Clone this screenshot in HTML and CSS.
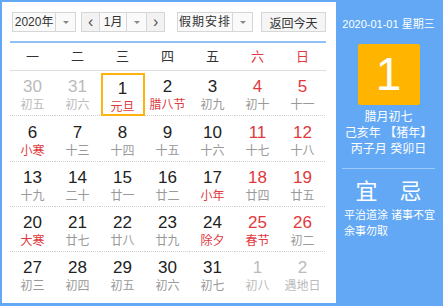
FILE: index.html
```html
<!DOCTYPE html>
<html lang="zh">
<head>
  <meta charset="UTF-8">
  <title>万年历</title>
  <link rel="stylesheet" href="styles.css">
</head>
<body>
  <div class="calendar">
    <div class="main">
      <div class="toolbar">
        <div class="select year">
          <span class="value">2020年</span>
          <span class="arrow"></span>
        </div>
        <div class="month-group">
          <span class="nav">&lsaquo;</span>
          <div class="select month">
            <span class="value">1月</span>
            <span class="arrow"></span>
          </div>
          <span class="nav">&rsaquo;</span>
        </div>
        <div class="select holiday">
          <span class="value">假期安排</span>
          <span class="arrow"></span>
        </div>
        <button class="today-btn">返回今天</button>
      </div>

      <div class="week">
        <span>一</span><span>二</span><span>三</span><span>四</span><span>五</span>
        <span class="red">六</span><span class="red">日</span>
      </div>

      <div class="days" id="days"></div>
    </div>

    <div class="side">
      <div class="side-date">2020-01-01 星期三</div>
      <div class="big-day">1</div>
      <div class="lunar-info">
        <p>腊月初七</p>
        <p>己亥年 【猪年】</p>
        <p>丙子月 癸卯日</p>
      </div>
      <div class="yiji">
        <span>宜</span><span>忌</span>
      </div>
      <div class="yiji-text">平治道涂 诸事不宜<br>余事勿取</div>
    </div>
  </div>

  <script>
    // [day, lunar, flags] flags: o = other month, r = red number, l = red lunar, s = selected
    var days = [
      ['30', '初五', 'o'], ['31', '初六', 'o'], ['1', '元旦', 'ls'], ['2', '腊八节', 'l'], ['3', '初九', ''], ['4', '初十', 'r'], ['5', '十一', 'r'],
      ['6', '小寒', 'l'], ['7', '十三', ''], ['8', '十四', ''], ['9', '十五', ''], ['10', '十六', ''], ['11', '十七', 'r'], ['12', '十八', 'r'],
      ['13', '十九', ''], ['14', '二十', ''], ['15', '廿一', ''], ['16', '廿二', ''], ['17', '小年', 'l'], ['18', '廿四', 'r'], ['19', '廿五', 'r'],
      ['20', '大寒', 'l'], ['21', '廿七', ''], ['22', '廿八', ''], ['23', '廿九', ''], ['24', '除夕', 'l'], ['25', '春节', 'rl'], ['26', '初二', 'r'],
      ['27', '初三', ''], ['28', '初四', ''], ['29', '初五', ''], ['30', '初六', ''], ['31', '初七', ''], ['1', '初八', 'o'], ['2', '遇地日', 'o']
    ];
    var html = '';
    days.forEach(function (d, i) {
      var cls = 'day';
      if (d[2].indexOf('o') > -1) cls += ' other';
      if (d[2].indexOf('r') > -1) cls += ' red-num';
      if (d[2].indexOf('l') > -1) cls += ' red-lunar';
      if (d[2].indexOf('s') > -1) cls += ' selected';
      if (i >= 28) cls += ' last';
      html += '<div class="' + cls + '"><span class="num">' + d[0] + '</span><span class="lunar">' + d[1] + '</span></div>';
    });
    document.getElementById('days').innerHTML = html;
  </script>
</body>
</html>
```

FILE: styles.css
```css
body {
  margin: 0;
  font-family: "Liberation Sans", Arial, "Noto Sans CJK SC", sans-serif;
  color: #333;
  background: #fff;
}
.calendar {
  display: flex;
  width: 439px;
  height: 301px;
  border: 2px solid #62a8f5;
  border-bottom-width: 3px;
}
.main {
  width: 316px;
  padding: 10px 10px 0 8px;
}
.toolbar {
  display: flex;
  align-items: center;
  height: 20px;
  font-size: 12px;
}
.select {
  display: flex;
  height: 20px;
  border: 1px solid #d6d6d6;
  box-sizing: border-box;
  background: #fafafa;
}
.select .value {
  flex: 1;
  line-height: 18px;
  text-align: center;
  color: #333;
}
.select .arrow {
  position: relative;
  width: 19px;
  border-left: 1px solid #d6d6d6;
}
.select .arrow::after {
  content: "";
  position: absolute;
  left: 7px;
  top: 8px;
  border-left: 3px solid transparent;
  border-right: 3px solid transparent;
  border-top: 3px solid #888;
}
.year {
  width: 66px;
  margin-left: 2px;
}
.month-group {
  display: flex;
  margin-left: 5px;
  height: 20px;
  border: 1px solid #d6d6d6;
  box-sizing: border-box;
  background: #fafafa;
}
.month-group .nav {
  width: 17px;
  line-height: 17px;
  text-align: center;
  font-size: 16px;
  color: #555;
  background: #f2f2f2;
}
.month-group .month {
  width: 48px;
  border-top: none;
  border-bottom: none;
  height: 18px;
}
.holiday {
  width: 78px;
  margin-left: 12px;
}
.holiday .value {
  letter-spacing: 1px;
}
.today-btn {
  margin-left: 8px;
  width: 67px;
  height: 20px;
  padding: 0;
  border: 1px solid #d6d6d6;
  background: #f5f5f5;
  font-family: inherit;
  font-size: 12px;
  color: #333;
}
.week {
  display: grid;
  grid-template-columns: repeat(7, 45px);
  height: 27px;
  margin-top: 9px;
  border-top: 2px solid #8fc1f5;
  border-bottom: 1px solid #ddd;
  font-size: 13px;
  line-height: 27px;
  text-align: center;
}
.week .red {
  color: #e0393e;
}
.days {
  display: grid;
  grid-template-columns: repeat(7, 45px);
}
.day {
  display: flex;
  flex-direction: column;
  align-items: center;
  height: 44px;
  border-bottom: 1px dotted #cfcfcf;
  box-sizing: content-box;
}
.day.last {
  border-bottom: none;
}
.num {
  margin-top: 6px;
  font-size: 17px;
  line-height: 20px;
  color: #222;
}
.lunar {
  font-size: 12px;
  line-height: 16px;
  color: #999;
}
.other .num,
.other .lunar {
  color: #bbb;
}
.red-num .num {
  color: #e0393e;
}
.red-lunar .lunar {
  color: #e0393e;
}
.selected {
  width: 40px;
  height: 39px;
  margin: 2px auto 1px;
  border: 2px solid #ffb30f;
}
.selected .num {
  margin-top: 4px;
}
.side {
  width: 105px;
  background: #62a8f5;
  color: #fff;
  text-align: center;
}
.side-date {
  margin-top: 14px;
  font-size: 11px;
  line-height: 16px;
  white-space: nowrap;
}
.big-day {
  width: 62px;
  height: 61px;
  margin: 12px auto 0;
  background: #ffb400;
  border-radius: 2px;
  font-size: 46px;
  line-height: 61px;
}
.lunar-info {
  margin-top: 4px;
  font-size: 12px;
}
.lunar-info p {
  margin: 0;
  line-height: 16px;
}
.yiji {
  display: flex;
  justify-content: center;
  gap: 22px;
  margin: 11px 6px 0;
  padding-top: 10px;
  border-top: 1px solid #9ccaf8;
  font-size: 22px;
  line-height: 26px;
}
.yiji-text {
  margin: 2px 4px 0 8px;
  font-size: 11px;
  line-height: 16px;
  text-align: left;
  white-space: nowrap;
}
```
